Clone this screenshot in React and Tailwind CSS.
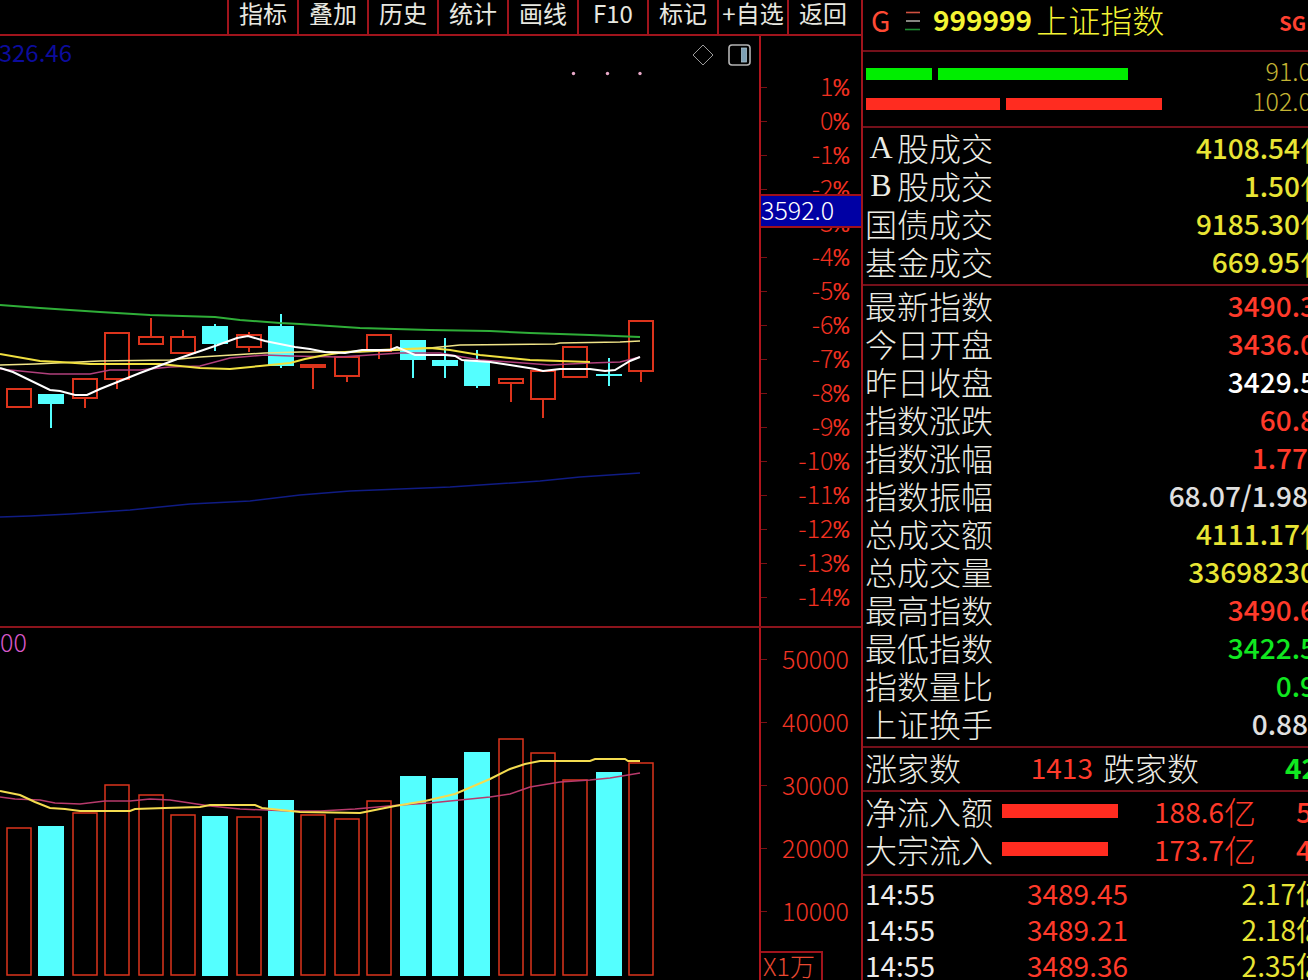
import React from 'react';

const RED = '#dc341c';
const CYAN = '#54ffff';

const TOOLS = ['指标', '叠加', '历史', '统计', '画线', 'F10', '标记', '+自选', '返回'];
const PERCENTS = [1, 0, -1, -2, -3, -4, -5, -6, -7, -8, -9, -10, -11, -12, -13, -14];
const VOLUMES = [50000, 40000, 30000, 20000, 10000];

// x: left edge, top/bottom: body, high/low: wick ends, vol: top of the volume bar
const CANDLES = [
    { x: 6, top: 352, bottom: 371, high: 352, low: 372, vol: 199 },
    { x: 38, up: false, top: 358, bottom: 368, high: 358, low: 392, vol: 198 },
    { x: 72, top: 342, bottom: 362, high: 342, low: 372, vol: 184 },
    { x: 104, top: 296, bottom: 343, high: 296, low: 353, vol: 156 },
    { x: 138, top: 300, bottom: 308, high: 282, low: 308, vol: 166 },
    { x: 170, top: 300, bottom: 317, high: 294, low: 317, vol: 186 },
    { x: 202, up: false, top: 290, bottom: 308, high: 288, low: 315, vol: 188 },
    { x: 236, top: 298, bottom: 311, high: 296, low: 316, vol: 188 },
    { x: 268, up: false, top: 290, bottom: 330, high: 278, low: 332, vol: 172 },
    { x: 300, top: 328, bottom: 331, high: 328, low: 353, vol: 186 },
    { x: 334, top: 320, bottom: 340, high: 320, low: 346, vol: 190 },
    { x: 366, top: 298, bottom: 315, high: 298, low: 323, vol: 172 },
    { x: 400, up: false, top: 304, bottom: 324, high: 304, low: 342, vol: 148 },
    { x: 432, up: false, top: 324, bottom: 330, high: 302, low: 342, vol: 150 },
    { x: 464, up: false, top: 325, bottom: 350, high: 314, low: 352, vol: 124 },
    { x: 498, top: 342, bottom: 347, high: 342, low: 366, vol: 110 },
    { x: 530, top: 334, bottom: 363, high: 334, low: 382, vol: 124 },
    { x: 562, top: 310, bottom: 341, high: 310, low: 341, vol: 151 },
    { x: 596, up: false, top: 338, bottom: 340, high: 322, low: 350, vol: 144 },
    { x: 628, top: 284, bottom: 335, high: 284, low: 346, vol: 134 },
];

const PRICE_LINES = [
    { color: '#101c84', width: 1.5, points: '0,481 30,480 70,478 130,474 190,468 250,465 300,459 350,455 450,451 540,445 580,441 640,437' },
    { color: '#2fae38', width: 2, points: '0,269 40,272 70,274 100,276 150,279 215,281 240,284 280,287 300,288 330,290 360,292 430,294 490,295 530,297 590,299 640,301' },
    { color: '#b0407c', width: 1.5, points: '0,333 20,335 50,338 90,338 110,334 140,334 170,331 200,330 230,322 265,319 290,320 340,321 400,317 440,317 480,324 510,326 550,329 590,327 620,326 640,321' },
    { color: '#f0e488', width: 1.5, points: '0,329 35,328 100,325 170,324 200,321 232,319 265,317 300,316 360,316 400,314 430,312 460,309 555,308 560,307 620,306 640,305' },
    { color: '#f0e040', width: 2, points: '0,318 40,325 60,326 90,328 160,328 200,332 230,333 260,330 290,327 305,323 325,319 345,316 380,314 430,312 450,314 480,319 510,322 530,324 560,325 590,326' },
    { color: '#ffffff', width: 2, points: '0,332 13,336 50,354 60,355 75,359 87,359 100,353 140,337 180,322 215,310 237,302 248,300 265,305 295,311 310,313 325,316 345,317 362,314 390,314 397,311 415,319 445,319 455,320 462,324 490,326 510,329 535,333 543,335 560,333 590,333 605,335 615,334 630,325 640,321' },
];

const VOLUME_LINES = [
    { color: '#b83a6c', width: 1.5, points: '0,169 15,171 40,172 55,175 80,176 105,173 130,173 150,171 170,172 190,175 210,178 240,181 290,183 320,183 355,181 400,177 430,175 460,172 490,169 510,166 530,159 560,154 590,152 610,150 640,145' },
    { color: '#f4dc50', width: 2, points: '0,163 20,167 35,174 50,180 65,181 80,183 130,183 135,181 165,180 200,179 210,177 255,177 262,180 300,184 360,185 375,182 395,178 425,173 455,166 490,151 510,141 525,136 540,133 590,133 595,131 625,131 628,133 640,133' },
];

const TURNOVER = [
    { letter: 'A', label: '股成交', value: '4108.54亿' },
    { letter: 'B', label: '股成交', value: '1.50亿' },
    { label: '国债成交', value: '9185.30亿' },
    { label: '基金成交', value: '669.95亿' },
];

const INDEX_ROWS = [
    { label: '最新指数', value: '3490.3', color: 'text-[#ff3a2a]' },
    { label: '今日开盘', value: '3436.0', color: 'text-[#ff3a2a]' },
    { label: '昨日收盘', value: '3429.5', color: 'text-white' },
    { label: '指数涨跌', value: '60.8', color: 'text-[#ff3a2a]' },
    { label: '指数涨幅', value: '1.77', color: 'text-[#ff3a2a]', percent: true },
    { label: '指数振幅', value: '68.07/1.98', color: 'text-[#e0e0e0]', percent: true },
    { label: '总成交额', value: '4111.17亿', color: 'text-[#e8e434]' },
    { label: '总成交量', value: '33698230', color: 'text-[#e8e434]' },
    { label: '最高指数', value: '3490.6', color: 'text-[#ff3a2a]' },
    { label: '最低指数', value: '3422.5', color: 'text-[#10e820]' },
    { label: '指数量比', value: '0.9', color: 'text-[#10e820]' },
    { label: '上证换手', value: '0.88', color: 'text-[#e0e0e0]', percent: true },
];

const FLOWS = [
    { label: '净流入额', width: 116, value: '188.6亿', next: '5' },
    { label: '大宗流入', width: 106, value: '173.7亿', next: '4' },
];

const TICKS = [
    { time: '14:55', price: '3489.45', amount: '2.17亿' },
    { time: '14:55', price: '3489.21', amount: '2.18亿' },
    { time: '14:55', price: '3489.36', amount: '2.35亿' },
];

const Lines = ({ lines }) => lines.map((line) => (
    <polyline key={line.color} points={line.points} fill="none" stroke={line.color} strokeWidth={line.width} />
));

const Toolbar = () => (
    <nav className="flex h-9 shrink-0 justify-end border-b-2 border-[#a0141c] pr-1">
        {TOOLS.map((tool) => (
            <button key={tool} type="button" className="w-[70px] whitespace-nowrap border-l-2 border-[#a0141c] pb-2 text-2xl leading-[26px] text-[#e8e8e0]">
                {tool}
            </button>
        ))}
    </nav>
);

const PriceChart = () => (
    <div className="relative min-w-0 flex-1 overflow-hidden">
        <svg className="block h-full w-full">
            {CANDLES.map((c) => (
                <g key={c.x} stroke={c.up === false ? CYAN : RED} strokeWidth="2">
                    <line x1={c.x + 13} x2={c.x + 13} y1={c.high} y2={c.top} />
                    <line x1={c.x + 13} x2={c.x + 13} y1={c.bottom} y2={c.low} />
                    {c.up === false
                        ? <rect x={c.x} y={c.top} width="26" height={c.bottom - c.top} fill={CYAN} stroke="none" />
                        : <rect x={c.x + 1} y={c.top + 1} width="24" height={c.bottom - c.top - 1} fill="none" />}
                </g>
            ))}
            <Lines lines={PRICE_LINES} />
            <g fill="#e8a8c8">
                <circle cx="573.5" cy="37.5" r="1.7" />
                <circle cx="607.5" cy="37.5" r="1.7" />
                <circle cx="640" cy="37.5" r="1.7" />
            </g>
        </svg>
        <span className="absolute left-0 top-1 flex w-[72px] justify-end text-2xl leading-6 text-[#0c0c9c]">326.46</span>
        <div className="absolute right-2 top-2 flex items-center gap-[14px]">
            <button type="button" aria-label="标注">
                <svg width="22" height="22" viewBox="0 0 22 22" fill="none" stroke="#9a9a9a">
                    <path d="M11 1 21 11 11 21 1 11Z" />
                </svg>
            </button>
            <button type="button" aria-label="侧栏">
                <svg width="23" height="22" viewBox="0 0 23 22" fill="none">
                    <rect x="1" y="1" width="21" height="20" rx="3" stroke="#b4b4b4" strokeWidth="1.6" />
                    <rect x="13.5" y="4" width="5" height="14" fill="#7ea0b4" stroke="#a8c0cc" strokeWidth="0.8" />
                </svg>
            </button>
        </div>
    </div>
);

const PriceAxis = () => (
    <div className="relative w-[102px] shrink-0 border-l-2 border-[#b0141c] pt-[34px]">
        {PERCENTS.map((p) => (
            <div key={p} className="flex h-[34px] items-center justify-between pr-3 text-[25px] leading-[30px] text-[#f03020]">
                <span className="h-px w-1.5 bg-[#7a1014]" />
                <span className="flex items-baseline font-light">
                    {p}
                    <span className="font-['Liberation_Mono',monospace] text-[26px]">%</span>
                </span>
            </div>
        ))}
        <div className="absolute left-0 top-[158px] h-[34px] w-full border-y-2 border-[#a0101c] bg-[#0000a4] text-[25px] font-light leading-[26px] text-white">
            3592.0
        </div>
    </div>
);

const VolumeChart = () => (
    <div className="relative min-w-0 flex-1 overflow-hidden">
        <svg className="block h-full w-full">
            {CANDLES.map((c) => (
                c.up === false
                    ? <rect key={c.x} x={c.x} y={c.vol} width="26" height={348 - c.vol} fill={CYAN} />
                    : <rect key={c.x} x={c.x + 1} y={c.vol + 1} width="24" height={346 - c.vol} fill="none" stroke={RED} strokeWidth="1.5" />
            ))}
            <Lines lines={VOLUME_LINES} />
        </svg>
        <span className="absolute left-0 top-0 text-[25px] font-light leading-[26px] text-[#d858c8]">00</span>
    </div>
);

const VolumeAxis = () => (
    <div className="w-[102px] shrink-0 border-l-2 border-[#b0141c]">
        {VOLUMES.map((v) => (
            <div key={v} className="flex h-[63px] items-center justify-between pr-3 text-[25px] font-light text-[#f03424]">
                <span className="h-px w-1.5 bg-[#7a1014]" />
                <span className="pb-0.5">{v}</span>
            </div>
        ))}
        <div className="mt-2 h-8 w-[62px] whitespace-nowrap border-r-2 border-t-2 border-[#a0141c] pl-0.5 text-[25px] font-light leading-[24px] text-[#e84830]">
            X1万
        </div>
    </div>
);

const valueMargin = (row) => {
    if (row.value.endsWith('亿')) return '-mr-6';
    return row.percent ? 'mr-0' : '-mr-2';
};

const StatRow = ({ row, color }) => (
    <div className="flex h-[38px] items-center justify-between pb-1 text-[28px] leading-[34px]">
        <dt className="flex text-[32px] font-light text-[#ecece4]">
            {row.letter && <span className="w-8 text-center font-['Liberation_Serif',serif]">{row.letter}</span>}
            {row.label}
        </dt>
        <dd className={`flex shrink-0 whitespace-nowrap font-medium ${valueMargin(row)} ${color}`}>
            {row.value.replace('亿', '')}
            {row.value.endsWith('亿') && <span className="w-8 text-[32px] font-light">亿</span>}
        </dd>
    </div>
);

const QuotePanel = () => (
    <aside className="w-[447px] shrink-0 overflow-hidden border-l-2 border-[#a0141c]">
        <header className="flex h-[52px] items-center border-b-2 border-[#74101a] pb-2 pl-2 text-[28px]">
            <span className="w-[34px] pb-0.5 text-[#ff4a34]">G</span>
            <svg width="16" height="20" viewBox="0 0 16 20" strokeWidth="1.6">
                <path d="M1 1.5H15" stroke="#d05040" />
                <path d="M1 10H15" stroke="#a8a8a0" />
                <path d="M0 18.5H15" stroke="#1c8c30" />
            </svg>
            <h1 className="ml-3 flex items-center gap-1 pb-1 text-[#f4f434]">
                <span className="font-bold">999999</span>
                <span className="text-[32px] font-light">上证指数</span>
            </h1>
            <span className="ml-auto mr-0.5 pt-1 text-xl font-bold text-[#ff4030]">SG</span>
        </header>

        <section className="h-[76px] border-b-2 border-[#74101a] pl-[3px] pt-[7px] text-[25px] font-light leading-[26px] text-[#c4b434]">
            <div className="flex h-[30px] items-center gap-1.5">
                <span className="h-3 w-[66px] bg-[#00ee00]" />
                <span className="h-3 w-[190px] bg-[#00ee00]" />
                <span className="-mr-1 ml-auto pb-2">91.0</span>
            </div>
            <div className="flex h-[30px] items-center gap-1.5">
                <span className="h-3 w-[134px] bg-[#ff2c20]" />
                <span className="h-3 w-[156px] bg-[#ff2c20]" />
                <span className="-mr-1 ml-auto pb-2">102.0</span>
            </div>
        </section>

        <dl className="border-b-2 border-[#74101a] py-0.5 pl-0.5">
            {TURNOVER.map((row) => (
                <StatRow key={row.value} row={row} color="text-[#e8e434]" />
            ))}
        </dl>

        <dl className="border-b-2 border-[#74101a] py-0.5 pl-0.5">
            {INDEX_ROWS.map((row) => (
                <StatRow key={row.label} row={row} color={row.color} />
            ))}
        </dl>

        <section className="flex h-11 items-center border-b-2 border-[#74101a] pb-1 pl-0.5 text-[32px] font-light leading-[38px] text-[#ecece4]">
            <span>涨家数</span>
            <span className="ml-auto text-[28px] font-normal text-[#ff3a2a]">1413</span>
            <span className="ml-2.5">跌家数</span>
            <span className="-mr-2.5 ml-[86px] text-[28px] font-bold text-[#10e820]">42</span>
        </section>

        <section className="h-[84px] border-b-2 border-[#74101a] pl-0.5">
            {FLOWS.map((flow) => (
                <div key={flow.label} className="flex h-[38px] items-center text-[28px] leading-[38px] text-[#ff3a2a]">
                    <span className="text-[32px] font-light text-[#ecece4]">{flow.label}</span>
                    <span className="ml-[9px] h-3.5 bg-[#ff2c20]" style={{ width: flow.width }} />
                    <span className="ml-auto flex">
                        {flow.value.slice(0, -1)}
                        <span className="text-[32px] font-light">亿</span>
                    </span>
                    <span className="-mr-1 ml-10 font-medium">{flow.next}</span>
                </div>
            ))}
        </section>

        <table className="w-full text-[28px] leading-[34px]">
            <tbody>
                {TICKS.map((tick) => (
                    <tr key={tick.price} className="h-9 align-top">
                        <td className="w-[164px] p-0 pl-0.5 text-[#ececec]">{tick.time}</td>
                        <td className="p-0 text-[#ff3a2a]">{tick.price}</td>
                        <td className="p-0 text-right text-[#e8e434]">
                            <div className="-mr-4">{tick.amount}</div>
                        </td>
                    </tr>
                ))}
            </tbody>
        </table>
    </aside>
);

export default function App() {
    return (
        <div className="flex h-screen overflow-hidden bg-black font-['Noto_Sans_CJK_SC',sans-serif]">
            <main className="flex min-w-0 flex-1 flex-col">
                <Toolbar />
                <section className="flex h-[592px] shrink-0 border-b-2 border-[#8c141c]">
                    <PriceChart />
                    <PriceAxis />
                </section>
                <section className="flex min-h-0 flex-1">
                    <VolumeChart />
                    <VolumeAxis />
                </section>
            </main>
            <QuotePanel />
        </div>
    );
}
